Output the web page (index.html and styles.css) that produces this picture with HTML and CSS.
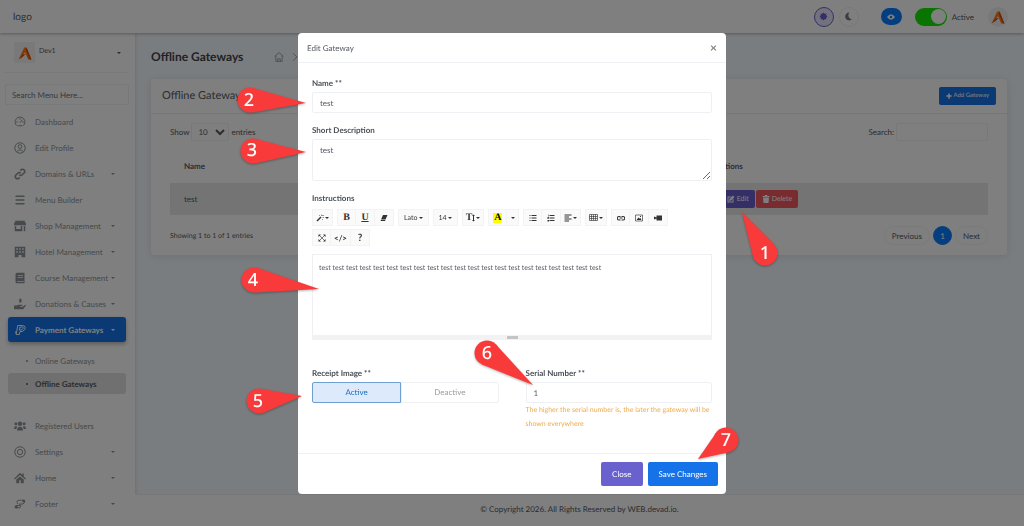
FILE: index.html
```html
<!DOCTYPE html>
<html lang="en">
<head>
<meta charset="UTF-8">
<meta name="viewport" content="width=device-width, initial-scale=1.0">
<title>Offline Gateways</title>
<link rel="stylesheet" href="styles.css">
</head>
<body>
<svg class="defs" aria-hidden="true">
  <symbol id="mark" viewBox="0 0 20 20">
    <path fill="#ff7a1a" d="M9 3h3l6 15h-4l-4-9-4 5-4 4z"/>
    <path fill="#d9480f" d="M2 18l5-6 4-1-4 4zM12 3l6 15h-2L11 6z"/>
  </symbol>
</svg>

<header class="topbar">
  <a class="logo" href="#">logo</a>
  <div class="topbar-tools">
    <div class="theme">
      <button class="round sun" aria-label="Light theme">
        <svg viewBox="0 0 16 16"><path fill="#6861ce" d="M3 3h10v10H3zM8 1l7 7-7 7-7-7z"/></svg>
      </button>
      <button class="round moon" aria-label="Dark theme">
        <svg viewBox="0 0 16 16"><path fill="#777b88" d="M10 1a7 7 0 1 0 4 12A7 7 0 0 1 10 1z"/></svg>
      </button>
    </div>
    <a class="eye" href="#" aria-label="View website">
      <svg viewBox="0 0 16 12"><path fill="#fff" d="M0 6q8-11 16 0-8 11-16 0z"/><circle cx="8" cy="6" r="2.500" fill="#0a7cff"/></svg>
    </a>
    <label class="status"><input type="checkbox" class="switch" checked>Active</label>
    <a class="avatar" href="#" aria-label="Account"><svg><use href="#mark"/></svg></a>
  </div>
</header>

<div class="wrapper">
  <nav class="sidebar">
    <a class="user caret" href="#">
      <span class="user-pic"><svg><use href="#mark"/></svg></span>
      <span class="user-name">Dev1</span>
    </a>
    <input class="menu-search" type="text" placeholder="Search Menu Here..." aria-label="Search menu">
    <ul class="menu">
      <li><a href="#"><svg viewBox="0 0 16 16"><path class="line" d="M4 13A6.500 6.500 0 1 1 12 13M8 9l3-4M3 8h2M11 8h2M8 3v2M5 13h6"/></svg>Dashboard</a></li>
      <li><a href="#"><svg viewBox="0 0 16 16"><circle class="line" cx="8" cy="8" r="7"/><circle class="line" cx="8" cy="6" r="2.500"/><path class="line" d="M3.500 13q4.500-5 9 0"/></svg>Edit Profile</a></li>
      <li><a class="caret" href="#"><svg viewBox="0 0 16 16"><path class="thick" d="M7 9a3 3 0 0 0 4 0l3-3a3 3 0 0 0-4-4L8.500 3.500M9 7a3 3 0 0 0-4 0l-3 3a3 3 0 0 0 4 4l1.500-1.500"/></svg>Domains &amp; URLs</a></li>
      <li><a href="#"><svg viewBox="0 0 16 16"><path class="thick" d="M2 3h12M2 8h12M2 13h12"/></svg>Menu Builder</a></li>
      <li><a class="caret" href="#"><svg viewBox="0 0 16 16"><path d="M2 1h12l2 4v2H0V5zM1 8h2v4h6V8h2v7H1zM13 8h2v7h-2z"/></svg>Shop Management</a></li>
      <li><a class="caret" href="#"><svg viewBox="0 0 16 16"><path fill-rule="evenodd" d="M1 1h14v14h-5v-3H6v3H1zM3 3v2h2V3zm4 0v2h2V3zm4 0v2h2V3zM3 7v2h2V7zm4 0v2h2V7zm4 0v2h2V7z"/></svg>Hotel Management</a></li>
      <li><a class="caret" href="#"><svg viewBox="0 0 16 16"><path fill-rule="evenodd" d="M4 1h10v14H4a2 2 0 0 1-2-2V3a2 2 0 0 1 2-2zm1 3v1h7V4zm0 3v1h7V7zm-1 5v1h9v-1z"/></svg>Course Management</a></li>
      <li><a class="caret" href="#"><svg viewBox="0 0 16 16"><path d="M7 1h3v5H7zM0 10h3l3-1h5v2H8v1h3l4-3 1 1-4 5H0z"/></svg>Donations &amp; Causes</a></li>
      <li class="active"><a class="caret" href="#"><svg viewBox="0 0 16 16"><path class="line" d="M3 13 5 2h6q4 0 4 3t-4 5H8l-1 4H3l-1-4M7 8l1-4h3q2 0 1 2t-3 2z"/></svg>Payment Gateways</a>
        <ul class="submenu">
          <li><a href="#">Online Gateways</a></li>
          <li class="current"><a href="#">Offline Gateways</a></li>
        </ul>
      </li>
      <li><a href="#"><svg viewBox="0 0 16 16"><circle cx="8" cy="5" r="3"/><circle cx="2.500" cy="5" r="2"/><circle cx="13.500" cy="5" r="2"/><path d="M4 14q0-5 4-5t4 5zM0 12q0-4 3-4l1 1-1 3zM16 12q0-4-3-4l-1 1 1 3z"/></svg>Registered Users</a></li>
      <li><a class="caret" href="#"><svg viewBox="0 0 16 16"><circle class="line" cx="8" cy="8" r="7"/><circle class="line" cx="8" cy="8" r="3.500"/></svg>Settings</a></li>
      <li><a class="caret" href="#"><svg viewBox="0 0 16 16"><path d="M8 1l3 3V2h2v4l3 3-1 1-7-6-7 6-1-1zM8 6l5 4v5H9v-4H7v4H3v-5z"/></svg>Home</a></li>
      <li><a class="caret" href="#"><svg viewBox="0 0 16 16"><path class="line" d="M5 8q-3-5 2-5h6q3 3-1 5H7q4 2 1 5H2q-2-2 1-3h5"/><circle cx="13" cy="4" r="2"/><circle cx="3" cy="12" r="2"/></svg>Footer</a></li>
    </ul>
  </nav>

  <div class="main">
    <main class="content">
      <div class="page-head">
        <h1>Offline Gateways</h1>
        <svg viewBox="0 0 16 16"><path class="line" d="M1 7l7-6 7 6M3 6v9h10V6M6 15v-4h4v4"/></svg>
        <svg class="chevron" viewBox="0 0 16 16"><path class="line" d="M5 2l6 6-6 6"/></svg>
      </div>
      <section class="card">
        <div class="card-head">
          <h2>Offline Gateways</h2>
          <button class="btn small primary"><svg viewBox="0 0 16 16"><path d="M6 1h4v5h5v4h-5v5H6v-5H1V6h5z"/></svg>Add Gateway</button>
        </div>
        <div class="card-body">
          <div class="row">
            <label>Show <select><option>10</option></select> entries</label>
            <label>Search: <input class="table-search" type="search"></label>
          </div>
          <table>
            <thead><tr><th>Name</th><th>Actions</th></tr></thead>
            <tbody>
              <tr>
                <td>test</td>
                <td>
                  <div class="actions">
                    <button class="btn small purple"><svg viewBox="0 0 16 16"><path d="M1 3h8L7 5H3v8h8V9l2-2v8H1zM12 1l3 3-7 7-4 1 1-4z"/></svg>Edit</button>
                    <button class="btn small danger"><svg viewBox="0 0 16 16"><path d="M1 2h4l1-2h4l1 2h4v2H1zM2 5h12l-1 11H3z"/></svg>Delete</button>
                  </div>
                </td>
              </tr>
            </tbody>
          </table>
          <div class="row">
            <span class="info">Showing 1 to 1 of 1 entries</span>
            <div class="pages">
              <button>Previous</button>
              <button class="on">1</button>
              <button>Next</button>
            </div>
          </div>
        </div>
      </section>
    </main>
    <footer class="footer">© Copyright 2026. All Rights Reserved by WEB.devad.io.</footer>
  </div>
</div>

<div class="backdrop">
  <form class="modal" role="dialog" aria-labelledby="modal-title">
    <div class="modal-head">
      <h3 id="modal-title">Edit Gateway</h3>
      <button type="button" class="close" aria-label="Dismiss">×</button>
    </div>
    <div class="modal-body">
      <div class="field">
        <label for="name">Name **</label>
        <input id="name" type="text" value="test">
      </div>
      <div class="field">
        <label for="short">Short Description</label>
        <textarea id="short">test</textarea>
      </div>
      <div class="field">
        <span class="label" id="instructions">Instructions</span>
        <div class="toolbar">
          <div class="group">
            <button type="button" class="drop" aria-label="Style"><svg viewBox="0 0 16 16"><path d="M1 13 9 5l2 2-8 8zM10 1h1v3h-1zM13 6h3v1h-3zM6 2h2v1H6zM13 2h2v2h-2zM12 10h1v2h-1z"/></svg></button>
          </div>
          <div class="group">
            <button type="button" class="serif">B</button>
            <button type="button" class="serif under">U</button>
            <button type="button" aria-label="Remove format"><svg viewBox="0 0 16 16"><path d="M6 2h9l-4 9H2zM2 12h9l-1 2H1z"/></svg></button>
          </div>
          <div class="group"><button type="button" class="drop text">Lato</button></div>
          <div class="group"><button type="button" class="drop text">14</button></div>
          <div class="group"><button type="button" class="drop serif">T<svg class="updown" viewBox="0 0 6 16"><path d="M2 4h2v8H2zM3 1l3 3H0zM3 15l3-3H0z"/></svg></button></div>
          <div class="group">
            <button type="button" class="serif"><span class="hilite">A</span></button>
            <button type="button" class="drop narrow" aria-label="More colors"></button>
          </div>
          <div class="group">
            <button type="button" aria-label="Bulleted list"><svg viewBox="0 0 16 16"><path d="M1 2h2v2H1zM1 7h2v2H1zM1 12h2v2H1zM5 2h10v2H5zM5 7h10v2H5zM5 12h10v2H5z"/></svg></button>
            <button type="button" aria-label="Numbered list"><svg viewBox="0 0 16 16"><path d="M2 1h1v4H2zM1 6h3v1L2 9h2v1H1zM1 12h3v3H1zM5 2h10v2H5zM5 7h10v2H5zM5 12h10v2H5z"/></svg></button>
            <button type="button" class="drop" aria-label="Align"><svg viewBox="0 0 16 16"><path d="M1 1h14v2H1zM1 5h9v2H1zM1 9h14v2H1zM1 13h9v2H1z"/></svg></button>
          </div>
          <div class="group">
            <button type="button" class="drop" aria-label="Table"><svg class="wide" viewBox="0 0 18 14"><path class="line" d="M1 1h16v12H1zM1 5h16M1 9h16M5 1v12M9 1v12M13 1v12"/></svg></button>
          </div>
          <div class="group">
            <button type="button" aria-label="Link"><svg viewBox="0 0 16 16"><path class="thick" d="M7 12H4a3 3 0 0 1 0-7h3M9 5h3a3 3 0 0 1 0 7H9M5 8h6"/></svg></button>
            <button type="button" aria-label="Picture"><svg viewBox="0 0 16 16"><path class="line" d="M1 2h14v12H1z"/><path d="M3 12l4-5 2 2 2-1 2 4zM10 4h2v2h-2z"/></svg></button>
            <button type="button" aria-label="Video"><svg viewBox="0 0 16 16"><path d="M5 3h11v10H5V9L0 11V5l5 2z"/></svg></button>
          </div>
          <div class="group">
            <button type="button" aria-label="Full screen"><svg viewBox="0 0 16 16"><path d="M1 1h5L1 6zM10 1h5v5zM1 10l5 5H1zM15 10v5h-5z"/><path class="line" d="M3 3l10 10M13 3 3 13"/></svg></button>
            <button type="button" class="code">&lt;/&gt;</button>
            <button type="button" class="help">?</button>
          </div>
        </div>
        <div class="editor" contenteditable="true" role="textbox" aria-labelledby="instructions">test test test test test test test test test test test test test test test test test test test test test</div>
        <div class="grip"></div>
      </div>
      <div class="columns">
        <fieldset class="field">
          <legend>Receipt Image **</legend>
          <div class="choice">
            <label><input type="radio" name="receipt" checked>Active</label>
            <label><input type="radio" name="receipt">Deactive</label>
          </div>
        </fieldset>
        <div class="field">
          <label for="serial">Serial Number **</label>
          <input id="serial" type="number" value="1">
          <p class="hint">The higher the serial number is, the later the gateway will be shown everywhere</p>
        </div>
      </div>
    </div>
    <div class="modal-foot">
      <button type="button" class="btn purple">Close</button>
      <button type="submit" class="btn primary">Save Changes</button>
    </div>
  </form>
</div>

<!-- numbered step markers: circle, tapered tip, digit -->
<svg class="steps" width="1024" height="526" viewBox="0 0 1024 526">
  <g><circle cx="765" cy="253" r="12.500"/><path d="M774 244 742 212 753 256z"/><text x="765" y="259">1</text></g>
  <g><circle cx="250" cy="100" r="12.500"/><path d="M252 112.400 306 103 253 88z"/><text x="249" y="106">2</text></g>
  <g><circle cx="253" cy="151" r="12.500"/><path d="M256 163.200 306 152 256 139z"/><text x="252" y="156">3</text></g>
  <g><circle cx="254" cy="280" r="12.500"/><path d="M255 292.500 319 289 258 268z"/><text x="253" y="286">4</text></g>
  <g><circle cx="259" cy="401" r="12.500"/><path d="M264 412.500 302 396 261 388.700z"/><text x="258" y="407">5</text></g>
  <g><circle cx="487" cy="353" r="12.500"/><path d="M482 364.600 533 385 496 344.600z"/><text x="487" y="359">6</text></g>
  <g><circle cx="726" cy="440" r="12.500"/><path d="M716 433 698 459 729 452.200z"/><text x="726" y="446">7</text></g>
</svg>
</body>
</html>
```
FILE: styles.css
```css
* {
  box-sizing: border-box;
}
body {
  margin: 0;
  height: 100vh;
  overflow: hidden;
  display: flex;
  flex-direction: column;
  font-family: Lato, "Liberation Sans", sans-serif;
  font-size: 8px;
  line-height: 12px;
  text-rendering: geometricPrecision;
  color: #575962;
  background: #f5fafe;
}
h1, h2, h3, p, ul, fieldset {
  margin: 0;
  padding: 0;
}
ul {
  list-style: none;
}
a {
  color: inherit;
  text-decoration: none;
}
button, input, select, textarea {
  font: inherit;
  color: inherit;
  text-rendering: inherit;
}
button {
  padding: 0;
  border: none;
  background: none;
  cursor: pointer;
}
input, textarea {
  border: 1px solid #eff0f4;
  border-radius: 2px;
  background: #fff;
}
svg {
  fill: currentColor;
  flex: none;
}
.defs {
  position: absolute;
  width: 0;
  height: 0;
}
.line, .thick {
  fill: none;
  stroke: currentColor;
  stroke-width: 1.3;
}
.thick {
  stroke-width: 2.2;
}

/* top bar */
.topbar {
  display: flex;
  align-items: center;
  justify-content: space-between;
  height: 33px;
  flex: none;
  padding: 0 16px 0 13px;
  background: #fff;
  box-shadow: 0 1px 3px rgba(0, 0, 0, 0.3);
  z-index: 1;
}
.logo {
  font-size: 10px;
}
.topbar-tools, .theme {
  display: flex;
  align-items: center;
}
.theme {
  gap: 5px;
  margin-right: 22px;
}
.round {
  display: flex;
  align-items: center;
  justify-content: center;
  width: 20px;
  height: 20px;
  border: 1px solid #f1f1f1;
  border-radius: 50%;
}
.round svg {
  width: 9px;
  height: 9px;
}
.sun {
  border-color: #6861ce;
  background: #e6e3fb;
}
.eye {
  display: flex;
  align-items: center;
  justify-content: center;
  width: 21px;
  height: 17px;
  margin-right: 13px;
  border-radius: 9px;
  background: #0a7cff;
}
.eye svg {
  width: 8px;
  height: 6px;
}
.status {
  display: flex;
  align-items: center;
  gap: 5px;
  margin-right: 14px;
}
.switch {
  appearance: none;
  display: flex;
  justify-content: flex-end;
  align-items: center;
  width: 32px;
  height: 18px;
  margin: 0;
  padding: 0 1px;
  border: none;
  border-radius: 9px;
  background: #12e800;
}
.switch::before {
  content: "";
  width: 15px;
  height: 15px;
  border-radius: 50%;
  background: #fff;
}
.avatar {
  display: flex;
  align-items: center;
  justify-content: center;
  width: 20px;
  height: 20px;
  border-radius: 50%;
  background: #f1f1f1;
}
.avatar svg, .user-pic svg {
  width: 16px;
  height: 16px;
}

/* sidebar */
.wrapper {
  display: flex;
  flex: 1;
}
.sidebar {
  width: 135px;
  flex: none;
  padding: 0 6px 0 5px;
  background: #fff;
  box-shadow: 1px 0 3px rgba(60, 80, 120, 0.15);
  color: #8d9498;
}
.caret::after {
  content: "";
  margin-left: auto;
  border: 2px solid transparent;
  border-top-color: currentColor;
  border-bottom: none;
}
.user {
  display: flex;
  align-items: center;
  gap: 4px;
  height: 40px;
  padding: 0 8px 0 9px;
  border-bottom: 1px solid #f1f1f1;
  color: #575962;
}
.user-pic {
  display: flex;
  align-items: center;
  justify-content: center;
  width: 21px;
  height: 21px;
  background: #f3f3f3;
}
.user-name {
  padding-bottom: 4px;
  font-size: 7px;
}
.menu-search {
  display: block;
  width: 100%;
  height: 21px;
  margin: 11px 0 4px;
  padding: 0 6px;
}
.menu-search::placeholder {
  color: #6c757d;
}
.menu {
  padding: 0 3px;
}
.menu a {
  display: flex;
  align-items: center;
  height: 25px;
  margin-bottom: 1px;
  padding: 0 11px 0 6px;
  border-radius: 3px;
}
.menu a svg {
  width: 12px;
  height: 12px;
  margin-right: 9px;
}
.menu .active > a {
  background: #1572e8;
  color: #fff;
  font-weight: bold;
  box-shadow: 0 2px 4px rgba(0, 0, 0, 0.3);
}
.menu .submenu {
  padding: 7px 0 18px;
}
.menu .submenu a {
  height: 21px;
  padding: 0 18px;
}
.submenu a::before {
  content: "";
  width: 2px;
  height: 2px;
  margin-right: 7px;
  border-radius: 50%;
  background: currentColor;
}
.menu .current a {
  margin-top: 2px;
  background: #e0e0e0;
  color: #575962;
  font-weight: bold;
}

/* page */
.main {
  display: flex;
  flex: 1;
  flex-direction: column;
}
.content {
  flex: 1;
  padding: 14px 17px 0 16px;
}
.page-head {
  display: flex;
  align-items: center;
  height: 20px;
  margin-bottom: 12px;
  color: #8d9498;
}
h1 {
  margin-right: 27px;
  font-size: 12px;
  color: #40434c;
}
.page-head svg {
  width: 10px;
  height: 10px;
  margin: 0 2px 0 4px;
}
.card {
  border-radius: 3px;
  background: #fff;
  box-shadow: 0 1px 8px rgba(69, 65, 78, 0.15);
}
.card-head {
  display: flex;
  align-items: center;
  justify-content: space-between;
  height: 35px;
  padding: 0 11px;
  border-bottom: 1px solid #ebecec;
}
h2 {
  font-size: 11px;
  font-weight: 400;
}
.card-body {
  padding: 9px 19px 10px;
}
.row {
  display: flex;
  align-items: center;
  justify-content: space-between;
}
.row select {
  width: 38px;
  height: 18px;
  padding: 0 2px;
  border: 1px solid #f1f1f1;
  border-radius: 2px;
  background: #fff;
}
.table-search {
  width: 92px;
  height: 18px;
  margin: 0;
}
table {
  width: 100%;
  margin: 7px 0 11px;
  border-spacing: 0;
  table-layout: fixed;
}
th {
  height: 35px;
  padding: 0 14px;
  text-align: left;
}
th:first-child {
  width: 65%;
}
td {
  height: 32px;
  padding: 0 14px;
  background: #e9e9e9;
}
.actions, .pages {
  display: flex;
  align-items: center;
  gap: 1px;
}
.actions {
  padding-left: 5px;
}
.btn {
  display: flex;
  align-items: center;
  justify-content: center;
  height: 24px;
  padding: 0 12px;
  border-radius: 2px;
  color: #fff;
}
.small {
  gap: 2px;
  height: 18px;
  padding: 0 6px;
  font-size: 7px;
}
.small svg {
  width: 8px;
  height: 8px;
}
.card-head .small {
  gap: 1px;
  padding: 0 7px;
  font-size: 6px;
}
.card-head .small svg {
  width: 6px;
  height: 6px;
}
.primary {
  background: #1572e8;
}
.purple {
  background: #6861ce;
}
.danger {
  background: #f25961;
}
.info {
  font-size: 7px;
}
.pages {
  gap: 3px;
}
.pages button {
  height: 19px;
  padding: 0 7px;
  border: 1px solid #f4f4f4;
  border-radius: 10px;
}
.pages .on {
  width: 19px;
  padding: 0;
  border-color: #0a7cff;
  background: #0a7cff;
  color: #fff;
}
.footer {
  height: 32px;
  padding-top: 8px;
  border-top: 1px solid #eee;
  background: #fff;
  text-align: center;
}

/* modal */
.backdrop {
  position: fixed;
  inset: 0;
  z-index: 2;
  padding-top: 33px;
  background: rgba(0, 0, 0, 0.5);
}
.modal {
  width: 90%;
  max-width: 428px;
  margin: 0 auto;
  border-radius: 4px;
  background: #fff;
}
.modal-head {
  display: flex;
  align-items: center;
  justify-content: space-between;
  height: 30px;
  padding: 0 9px;
  border-bottom: 1px solid #eff0f4;
}
h3 {
  font-size: 8px;
  font-weight: 400;
}
.close {
  font-size: 12px;
  font-weight: bold;
  color: #7f7f7f;
}
.modal-body {
  padding: 14px;
}
.field {
  min-width: 0;
  margin-bottom: 11px;
  border: none;
}
.field > label, .label, legend {
  display: block;
  margin-bottom: 3px;
  padding: 0;
  font-weight: bold;
  color: #495057;
}
.field > input, .field > textarea {
  display: block;
  width: 100%;
  height: 21px;
  padding: 0 7px;
}
.field > textarea {
  height: 42px;
  padding-top: 4px;
}
input[type=number] {
  appearance: textfield;
}
.toolbar {
  display: flex;
  flex-wrap: wrap;
  gap: 3px 4px;
  margin: 5px 0 8px;
  color: #333;
}
.group {
  display: flex;
}
.group button {
  display: flex;
  align-items: center;
  justify-content: center;
  min-width: 19px;
  height: 17px;
  padding: 0 3px;
  border: 1px solid #f3f3f3;
  background: #fafafa;
}
.group button + button {
  border-left: none;
}
.group .text {
  padding: 0 5px;
  font-size: 7px;
}
.group svg {
  width: 8px;
  height: 8px;
}
.group .wide {
  width: 9px;
  height: 7px;
}
.group .updown {
  width: 3px;
}
.drop::after {
  content: "";
  margin-left: 1px;
  border: 2px solid transparent;
  border-top-color: currentColor;
  border-bottom: none;
}
.group .narrow {
  min-width: 11px;
}
.serif {
  font-family: "Liberation Serif", serif;
  font-size: 10px;
  font-weight: bold;
}
.under {
  text-decoration: underline;
}
.hilite {
  padding: 0 1px;
  line-height: 10px;
  background: #ff0;
  color: #000;
}
.code, .help {
  font-weight: bold;
}
.help {
  font-size: 10px;
}
.editor {
  height: 81px;
  padding: 7px 6px;
  border: 1px solid #eff0f4;
  border-bottom: none;
  font-size: 7px;
}
.grip {
  display: flex;
  align-items: center;
  justify-content: center;
  height: 5px;
  background: #f2f2f2;
}
.grip::before {
  content: "";
  width: 11px;
  height: 3px;
  background: #c4c4c4;
}
.columns {
  display: grid;
  grid-template-columns: 1fr 1fr;
  gap: 27px;
  margin-top: 27px;
}
.columns .field {
  margin-bottom: 8px;
}
.choice {
  display: flex;
}
.choice label {
  flex: 12;
  height: 21px;
  border: 1px solid #eff0f4;
  border-radius: 0 2px 2px 0;
  line-height: 19px;
  text-align: center;
  color: #9a9da3;
}
.choice label:has(:checked) {
  flex: 11;
  border-color: #6f9fd0;
  border-radius: 2px 0 0 2px;
  background: #dceafb;
  color: #1f6fc0;
}
.choice input {
  position: absolute;
  opacity: 0;
}
.hint {
  font-size: 7px;
  line-height: 14px;
  color: #f0ad4e;
}
.modal-foot {
  display: flex;
  justify-content: flex-end;
  gap: 5px;
  padding: 8px;
  border-top: 1px solid #eff0f4;
}
.modal-foot .btn {
  padding: 0 11px;
}

/* step markers */
.steps {
  position: absolute;
  top: 0;
  left: 0;
  z-index: 3;
  pointer-events: none;
  fill: #f83a3a;
  filter: drop-shadow(0 1px 1px rgba(0, 0, 0, 0.3));
}
.steps text {
  fill: #fff;
  font-family: "Noto Sans", sans-serif;
  font-size: 18px;
  font-weight: 500;
  text-anchor: middle;
}
```
